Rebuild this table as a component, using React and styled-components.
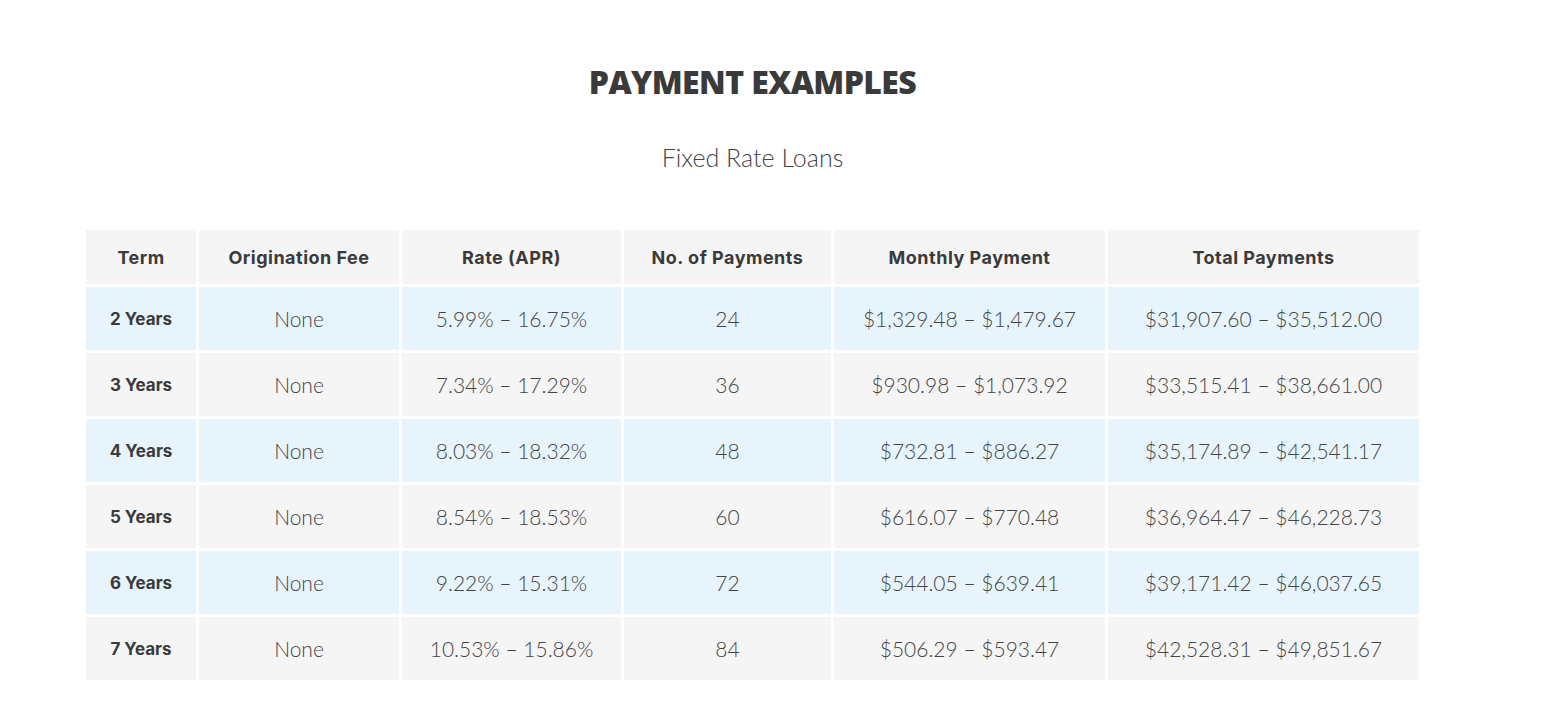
import styled, { createGlobalStyle } from 'styled-components';

const GlobalStyle = createGlobalStyle`
    body {
        margin: 0;
        background: #fff;
        font-family: 'Lato', 'Open Sans', sans-serif;
        color: #3f3f3f;
    }
`;

const rows = [
    ['2 Years', 'None', '5.99% – 16.75%', '24', '$1,329.48 – $1,479.67', '$31,907.60 – $35,512.00'],
    ['3 Years', 'None', '7.34% – 17.29%', '36', '$930.98 – $1,073.92', '$33,515.41 – $38,661.00'],
    ['4 Years', 'None', '8.03% – 18.32%', '48', '$732.81 – $886.27', '$35,174.89 – $42,541.17'],
    ['5 Years', 'None', '8.54% – 18.53%', '60', '$616.07 – $770.48', '$36,964.47 – $46,228.73'],
    ['6 Years', 'None', '9.22% – 15.31%', '72', '$544.05 – $639.41', '$39,171.42 – $46,037.65'],
    ['7 Years', 'None', '10.53% – 15.86%', '84', '$506.29 – $593.47', '$42,528.31 – $49,851.67'],
];

const headers = ['Term', 'Origination Fee', 'Rate (APR)', 'No. of Payments', 'Monthly Payment', 'Total Payments'];
const widths = [110, 200, 219, 207, 271, 311];

function App() {
    return (
        <>
            <GlobalStyle />
            <Section>
                <Title>PAYMENT EXAMPLES</Title>
                <Subtitle>Fixed Rate Loans</Subtitle>
                <Table>
                    <colgroup>
                        {widths.map((w, i) => <col key={i} style={{ width: w }} />)}
                    </colgroup>
                    <thead>
                        <tr>
                            {headers.map(h => <Th key={h}>{h}</Th>)}
                        </tr>
                    </thead>
                    <tbody>
                        {rows.map((r, i) => (
                            <Row key={r[0]} $blue={i % 2 === 0}>
                                {r.map((c, j) => (
                                    <Td key={j} $bold={j === 0}>{c}</Td>
                                ))}
                            </Row>
                        ))}
                    </tbody>
                </Table>
            </Section>
        </>
    );
}

export default App;

const Section = styled.section`
    width: 1337px;
    margin-left: 84px;
    padding-top: 62px;
    display: flex;
    flex-direction: column;
    align-items: center;
`;

const Title = styled.h2`
    margin: 0;
    font-family: 'Open Sans', sans-serif;
    font-weight: 800;
    font-size: 32px;
    line-height: 40px;
    letter-spacing: -0.6px;
    color: #3a3a3a;
`;

const Subtitle = styled.p`
    margin: 40px 0 0;
    font-family: 'Lato', sans-serif;
    font-weight: 300;
    font-size: 25px;
    line-height: 30px;
    color: #444;
`;

const Table = styled.table`
    margin-top: 55px;
    border-collapse: separate;
    border-spacing: 3px;
    table-layout: fixed;
    width: 1337px;
`;

const Th = styled.th`
    height: 54px;
    padding: 0;
    background: #f5f5f5;
    font-family: 'Inter', sans-serif;
    font-weight: 700;
    font-size: 18px;
    letter-spacing: 0.5px;
    color: #3a3a3a;
    text-align: center;
`;

const Row = styled.tr`
    td {
        background: ${p => (p.$blue ? '#e7f4fb' : '#f5f5f5')};
    }
`;

const Td = styled.td`
    height: 63px;
    padding: 0;
    text-align: center;
    font-family: ${p => (p.$bold ? "'Inter', sans-serif" : "'Lato', sans-serif")};
    font-weight: ${p => (p.$bold ? 700 : 300)};
    font-size: ${p => (p.$bold ? '17px' : '21px')};
    color: ${p => (p.$bold ? '#3a3a3a' : '#444')};
`;
